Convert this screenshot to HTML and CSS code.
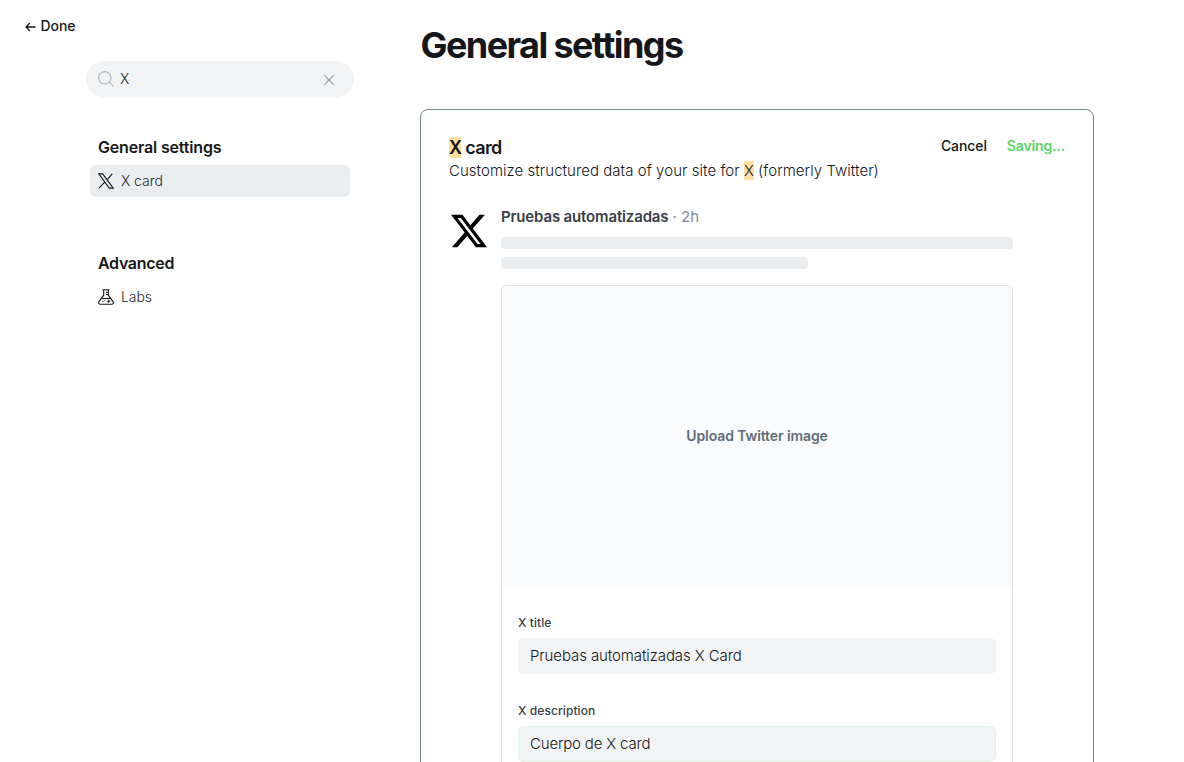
FILE: index.html
```html
<!DOCTYPE html>
<html lang="en">
<head>
<meta charset="utf-8">
<title>General settings</title>
<link rel="stylesheet" href="styles.css">
</head>
<body>
<svg width="0" height="0" class="defs" aria-hidden="true">
  <symbol id="x-logo" viewBox="0 0 24 24">
    <path d="M18.244 2.25h3.308l-7.227 8.26 8.502 11.24H16.17l-5.214-6.817L4.99 21.75H1.68l7.73-8.835L1.254 2.25H8.08l4.713 6.231zm-1.161 17.52h1.833L7.084 4.126H5.117z"/>
  </symbol>
</svg>
<div class="app">
  <aside class="sidebar">
    <a class="done">
      <svg class="done-arrow" viewBox="0 0 11 10"><path d="M10.5 5H1M4.9 1 1 5l3.900 4"/></svg>
      <span>Done</span>
    </a>
    <div class="search">
      <svg class="search-icon" viewBox="0 0 16 16"><circle cx="6.8" cy="6.8" r="6.2"/><path d="m11.2 11.2 4.4 4.4"/></svg>
      <span class="query">X</span>
      <svg class="clear-icon" viewBox="0 0 10 10"><path d="m.3.3 9.4 9.4M9.700.3.3 9.7"/></svg>
    </div>
    <nav class="nav">
      <section class="group">
        <h2>General settings</h2>
        <a class="item active"><svg class="item-icon" viewBox="0 0 16 16"><path d="M.8.9h3.900l10.500 14.200h-3.900L.8.9ZM14.300.9 9 6.900M6.800 9.200.9 15.100"/></svg><span>X card</span></a>
      </section>
      <section class="group">
        <h2 class="tight">Advanced</h2>
        <a class="item"><svg class="item-icon" viewBox="0 0 16 16"><path d="M4.500.7h7M5.700.7v5.500L1 12.600c-.9 1.400-.1 2.700 1.400 2.700h11.200c1.500 0 2.300-1.300 1.400-2.700l-4.700-6.400V.7M8 3.200h2.300M8 5.500h2.300M3.500 9.500h9M10.700 10.800v3M9.200 12.300h3M4.200 12.500h1M6.500 11.500h.8"/></svg><span>Labs</span></a>
      </section>
    </nav>
  </aside>
  <main class="main">
    <h1>General settings</h1>
    <section class="card">
      <header class="card-head">
        <div>
          <h3><mark>X</mark> card</h3>
          <p>Customize structured data of your site for <mark>X</mark> (formerly Twitter)</p>
        </div>
        <div class="actions"><a>Cancel</a><a class="saving">Saving...</a></div>
      </header>
      <div class="post">
        <svg class="post-logo" viewBox="0 0 24 24"><use href="#x-logo"/></svg>
        <div class="post-body">
          <div class="author"><span class="name">Pruebas automatizadas</span> <span class="time">· 2h</span></div>
          <div class="bar"></div>
          <div class="bar short"></div>
          <div class="preview">
            <div class="upload">Upload Twitter image</div>
            <div class="fields">
              <div class="field"><label>X title</label><div class="input">Pruebas automatizadas X Card</div></div>
              <div class="field"><label>X description</label><div class="input focused">Cuerpo de X card</div></div>
            </div>
          </div>
        </div>
      </div>
    </section>
  </main>
</div>
</body>
</html>
```
FILE: styles.css
```css
* { box-sizing: border-box; }
body {
  margin: 0;
  height: 762px;
  overflow: hidden;
  background: #fff;
  color: #15171a;
  font: 400 14px/20px Inter, sans-serif;
}
h1, h2, h3, p { margin: 0; }
svg { display: block; flex: none; fill: none; stroke: currentColor; }
.defs { position: absolute; }
.app { display: flex; height: 762px; overflow: hidden; }
.sidebar { width: 420px; flex: none; padding: 16px 66px 0 25px; }
.done { display: flex; align-items: center; gap: 4.6px; font-weight: 500; letter-spacing: -.13px; }
.done-arrow { width: 11px; height: 10px; margin-top: 1px; stroke-width: 1.3; }
.search {
  display: flex;
  align-items: center;
  width: 268px;
  height: 36px;
  margin: 25px 0 0 61px;
  padding: 0 20px 0 12px;
  border-radius: 18px;
  background: #f1f3f4;
}
.search-icon { width: 16px; height: 16px; color: #abb4be; stroke-width: 1.1; }
.query { flex: 1; padding-left: 6px; font-weight: 350; }
.clear-icon { width: 10px; height: 10px; margin: 2px 0 0; color: #8e9cac; stroke-width: 1.1; }
.nav { width: 260px; margin: 40px 0 0 65px; }
.group { margin-bottom: 56px; }
.group h2 { padding: 0 8px; margin-bottom: 8px; font-size: 16px; line-height: 20px; font-weight: 600; letter-spacing: -.17px; }
.group .tight { letter-spacing: -.3px; }
.item { display: flex; align-items: center; gap: 7px; height: 32px; padding: 0 8px; border-radius: 6px; color: #23272c; font-weight: 300; letter-spacing: -.05px; }
.item.active { background: #e9edf0; }
.item-icon { width: 16px; height: 16px; color: #15171a; stroke-width: 1.1; }
.main { width: 674px; flex: none; padding-top: 21px; }
h1 { padding-left: .6px; font-size: 36px; line-height: 48px; font-weight: 700; letter-spacing: -1.6px; }
.card { height: 1000px; margin-top: 40px; padding: 27px 28px; border: 1px solid #738a8f; border-radius: 8px; }
.card-head { display: flex; justify-content: space-between; }
.card-head h3 { font-size: 18px; line-height: 22px; font-weight: 600; letter-spacing: -.65px; }
.card-head p { margin-top: 1px; font-size: 15px; line-height: 22px; font-weight: 300; letter-spacing: .04px; }
mark { color: inherit; background: #ffdfa0; }
.actions { display: flex; gap: 20px; height: 18px; line-height: 18px; font-weight: 500; letter-spacing: -.1px; }
.saving { color: #5ad665; font-weight: 600; letter-spacing: -.15px; }
.post { display: flex; gap: 12px; margin-top: 23px; }
.post-logo { width: 40px; height: 40px; margin-top: 6px; fill: #000; stroke: none; }
.post-body { width: 512px; }
.author { height: 23px; margin-bottom: 9px; padding-top: 1px; font-size: 15px; line-height: 22px; color: #7c8b9a; letter-spacing: -.05px; }
.name { color: #394047; font-weight: 600; letter-spacing: -.15px; }
.bar { height: 12px; margin-bottom: 8px; border-radius: 4px; background: #e9edf0; }
.short { width: 307px; margin-bottom: 16px; }
.preview { height: 700px; border: 1px solid #dde1e5; border-radius: 6px; overflow: hidden; }
.upload { display: grid; place-items: center; height: 300px; background: #f9fafc; color: #626d79; font-weight: 600; letter-spacing: -.1px; }
.fields { display: grid; gap: 28px; padding: 28px 16px; }
.field label { display: block; height: 17px; margin-bottom: 7px; padding-top: 1px; font-size: 12px; line-height: 16px; font-weight: 500; letter-spacing: .08px; color: #394047; }
.input { height: 36px; padding: 0 11px; border: 1px solid #f1f3f4; border-radius: 6px; background: #f1f3f4; font-size: 15px; line-height: 34px; font-weight: 300; letter-spacing: -.1px; }
.input.focused { border-color: #e0f1e5; letter-spacing: -.18px; }
```
